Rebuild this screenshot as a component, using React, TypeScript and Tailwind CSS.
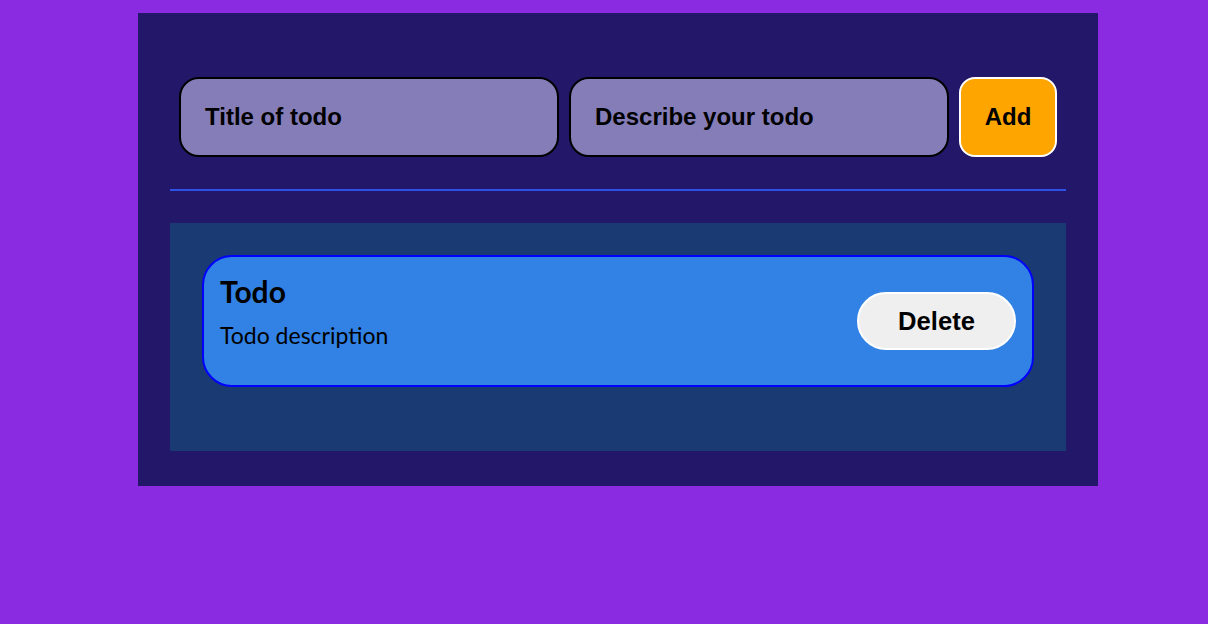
import React from "react";

export default function App() {
  return (
    <div className="min-h-[624px] w-full bg-[#8a2be2] pt-[13px]" style={{ fontFamily: '"Liberation Sans", Arial, sans-serif' }}>
      <div className="ml-[138px] w-[960px] bg-[#231769] p-[32px] pb-[35px]">
        <div className="mt-[32px] flex justify-center gap-[10px]">
          <div className="flex h-[80px] w-[380px] items-center rounded-[20px] border-2 border-black bg-[#857db7] pl-[24px] text-[24px] font-bold text-black">
            Title of todo
          </div>
          <div className="flex h-[80px] w-[380px] items-center rounded-[20px] border-2 border-black bg-[#857db7] pl-[24px] text-[24px] font-bold text-black">
            Describe your todo
          </div>
          <button className="flex h-[80px] w-[98px] items-center justify-center rounded-[16px] border-2 border-white bg-[#ffa500] text-[24px] font-bold text-black">
            Add
          </button>
        </div>
        <div className="mt-[32px] h-[2px] bg-[#2d50e6]" />
        <div className="mt-[32px] bg-[#193a73] p-[32px] pb-[64px]">
          <div className="flex h-[132px] items-center justify-between rounded-[30px] border-2 border-[#0000ff] bg-[#3182e4] px-[16px]">
            <div className="-mt-[20px]" style={{ fontFamily: 'Lato, "Open Sans", sans-serif' }}>
              <div className="text-[30px] font-bold leading-[34px] text-black">Todo</div>
              <div className="mt-[13px] text-[23px] leading-[28px] text-black">Todo description</div>
            </div>
            <button className="flex h-[58px] w-[159px] items-center justify-center rounded-full border-2 border-white bg-[#efefef] text-[25.6px] font-bold text-black">
              Delete
            </button>
          </div>
        </div>
      </div>
    </div>
  );
}
